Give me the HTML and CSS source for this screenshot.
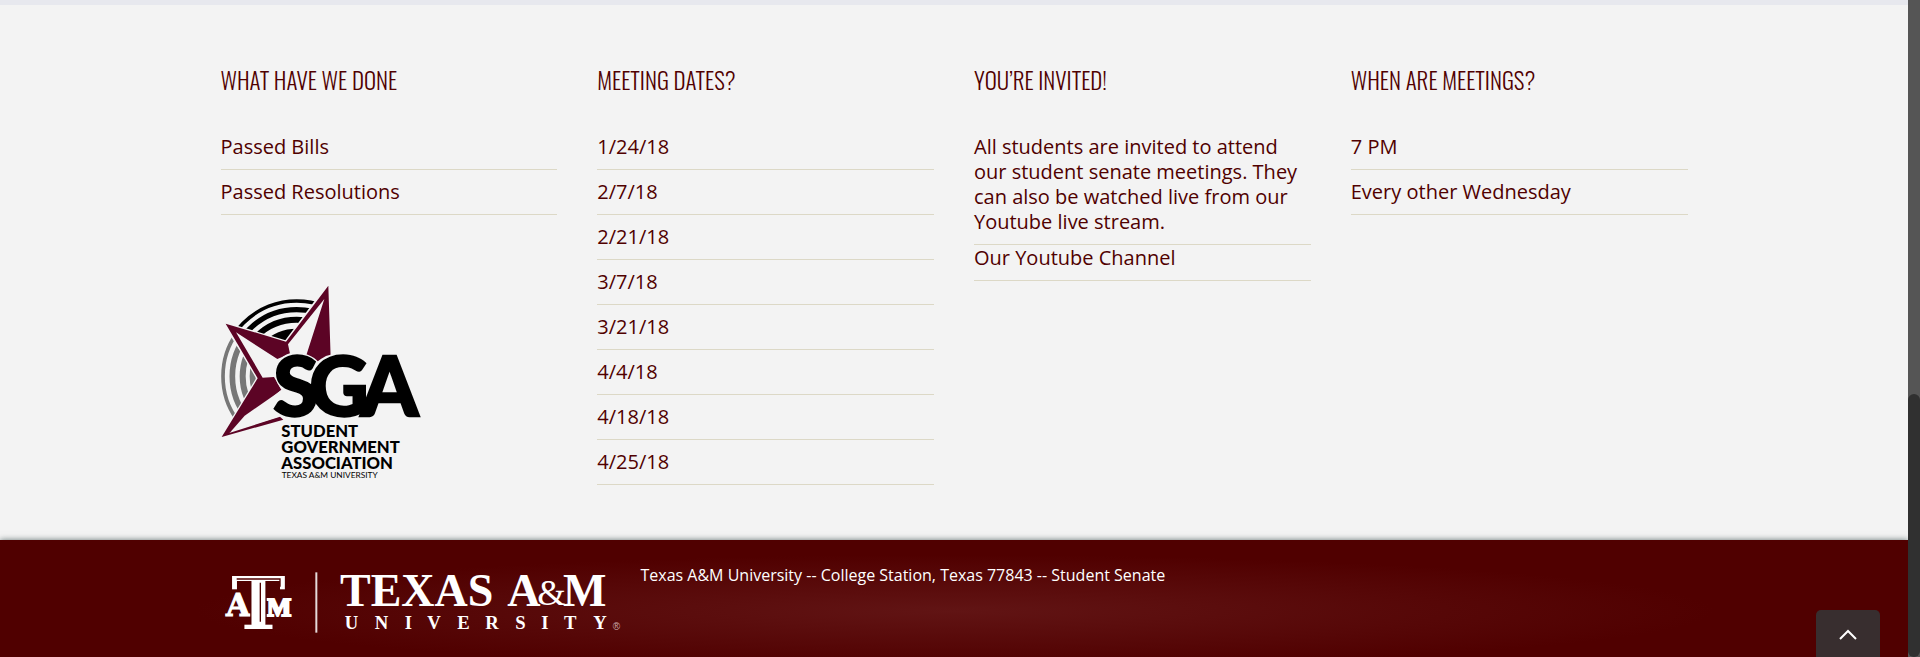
FILE: index.html
```html
<!DOCTYPE html>
<html lang="en">
<head>
    <meta charset="UTF-8">
    <meta name="viewport" content="width=device-width, initial-scale=1.0">
    <title>Student Senate</title>
    <link rel="stylesheet" href="styles.css">
</head>
<body>
    <section class="info">
        <div class="container columns">
            <div class="col">
                <h2>What have we done</h2>
                <ul>
                    <li><a href="#">Passed Bills</a></li>
                    <li><a href="#">Passed Resolutions</a></li>
                </ul>
                <svg class="sga-logo" viewBox="63 40 609 594" role="img" aria-label="Student Government Association">
                    <defs>
                        <clipPath id="ringTop"><path d="M80 50H383L258 218L110 172Z"/></clipPath>
                        <clipPath id="ringLeft"><path d="M50 190L92 200L172 325L97 450L50 450Z"/></clipPath>
                    </defs>
                    <!-- rings -->
                    <g clip-path="url(#ringTop)" fill="none" stroke="#000">
                        <circle cx="290" cy="320" r="226" stroke-width="11"/>
                        <circle cx="290" cy="320" r="200" stroke-width="16"/>
                        <circle cx="290" cy="320" r="170" stroke-width="18"/>
                        <circle cx="290" cy="320" r="128" stroke-width="30"/>
                    </g>
                    <g clip-path="url(#ringLeft)" fill="none" stroke="#777">
                        <circle cx="290" cy="320" r="221" stroke-width="11"/>
                        <circle cx="290" cy="320" r="193" stroke-width="17"/>
                        <circle cx="290" cy="320" r="162" stroke-width="18"/>
                        <circle cx="290" cy="320" r="132" stroke-width="18"/>
                    </g>
                    <!-- star -->
                    <path d="M383 48L392 278L350 284L300 330L242 444L65 502L173 326L77 162L258 216Z" fill="#f3f3f3" stroke="#f3f3f3" stroke-width="8"/>
                    <path d="M385 48L392 265L352 282L318 260L373 88L264 224L270 252L232 268L108 188L188 324L222 322L244 360L88 490L240 441L250 450L65 502L173 326L77 162L258 216Z" fill="#5c0425"/>
                    <path d="M92 486L134 438L244 362L240 440Z" fill="#f3f3f3"/>
                    <g class="sga-halo" aria-hidden="true">
                        <path d="M232 300Q250 255 300 258Q345 270 350 290Q390 255 440 260"/>
                        <path d="M232 300Q235 340 262 362L228 404"/>
                    </g>
                    <g class="sga-letters">
                        <text x="220" y="440">S</text>
                        <text x="328" y="440">G</text>
                        <text x="482" y="440">A</text>
                    </g>
                    <g class="sga-name">
                        <text x="244" y="502">STUDENT</text>
                        <text x="244" y="549">GOVERNMENT</text>
                        <text x="244" y="597">ASSOCIATION</text>
                    </g>
                    <text class="sga-school" x="245" y="624">TEXAS A&amp;M UNIVERSITY</text>
                </svg>
            </div>
            <div class="col">
                <h2>Meeting dates?</h2>
                <ul>
                    <li>1/24/18</li>
                    <li>2/7/18</li>
                    <li>2/21/18</li>
                    <li>3/7/18</li>
                    <li>3/21/18</li>
                    <li>4/4/18</li>
                    <li>4/18/18</li>
                    <li>4/25/18</li>
                </ul>
            </div>
            <div class="col">
                <h2>You’re invited!</h2>
                <ul>
                    <li>All students are invited to attend our student senate meetings. They can also be watched live from our Youtube live stream.</li>
                    <li class="tight"><a href="#">Our Youtube Channel</a></li>
                </ul>
            </div>
            <div class="col">
                <h2>When are meetings?</h2>
                <ul>
                    <li>7 PM</li>
                    <li>Every other Wednesday</li>
                </ul>
            </div>
        </div>
    </section>

    <footer>
        <div class="container footer-row">
            <a href="#" class="tamu">
                <svg viewBox="69 120 1200 192" role="img" aria-label="Texas A&amp;M University">
                    <g class="atm">
                        <text x="78" y="257">A</text>
                        <text x="200" y="257" class="atm-m">M</text>
                        <text x="94" y="297" class="atm-t">T</text>
                    </g>
                    <path d="M110 147H240V170M181 158V275" fill="none" stroke="#500000" stroke-width="4"/>
                    <path d="M349 127V308" stroke="#e5dada" stroke-width="6"/>
                    <g class="tamu-name">
                        <text x="420" y="228">TEXAS</text>
                        <text x="922" y="228">A</text>
                        <text x="1012" y="226" class="amp">&amp;</text>
                        <text x="1089" y="228">M</text>
                    </g>
                    <text class="tamu-univ" y="297" x="434 524 614 682 772 856 946 1024 1092 1180">UNIVERSITY</text>
                    <text class="tamu-reg" x="1238" y="299">®</text>
                </svg>
            </a>
            <p>Texas A&amp;M University -- College Station, Texas 77843 -- Student Senate</p>
        </div>
    </footer>

    <button type="button" class="to-top" aria-label="Back to top">
        <svg width="18" height="12" viewBox="0 0 18 12"><path d="M1 10L9 2L17 10" fill="none" stroke="#fff" stroke-width="2"/></svg>
    </button>
    <div class="scrollbar"><div class="thumb"></div></div>
</body>
</html>
```

FILE: styles.css
```css
* {
    box-sizing: border-box;
}

body {
    margin: 0;
    padding-right: 12px;
    min-height: 100vh;
    display: flex;
    flex-direction: column;
    background-color: #f3f3f3;
    color: #500000;
    font-family: "Open Sans", "Noto Sans", sans-serif;
    font-size: 20px;
    line-height: 25px;
}

a {
    color: inherit;
    text-decoration: none;
}

.container {
    width: 100%;
    max-width: 1467px;
    margin: 0 auto;
}

.info {
    border-top: 5px solid #e7e8ee;
    padding: 60px 0 55px;
}

.columns {
    display: grid;
    grid-template-columns: repeat(4, 1fr);
    gap: 40px;
}

h2 {
    margin: 0 0 30px;
    font-family: Oswald, "Open Sans Condensed Light", "Open Sans", sans-serif;
    font-size: 23px;
    font-weight: 300;
    line-height: 30px;
    text-transform: uppercase;
}

ul {
    list-style: none;
    margin: 0;
    padding: 0;
}

li {
    padding: 9px 0 10px;
    border-bottom: 1px solid #dcd8c6;
}

li.tight {
    padding-top: 0;
}

/* SGA logo */
.sga-logo {
    display: block;
    width: 203px;
    height: 198px;
    margin-top: 68px;
    overflow: visible;
}

.sga-halo {
    fill: none;
    stroke: #f3f3f3;
    stroke-width: 20px;
}

.sga-letters {
    font-family: Lato, sans-serif;
    font-weight: 900;
    font-size: 246px;
    stroke: #000;
    stroke-width: 7px;
}

.sga-name {
    font-family: Lato, sans-serif;
    font-weight: 900;
    font-size: 50px;
}

.sga-school {
    font-family: Lato, sans-serif;
    font-size: 25px;
}

/* footer */
footer {
    flex: 1;
    padding: 23px 0 24px;
    background: radial-gradient(ellipse 760px 56px at 50% 60%, #611414, #500000);
    box-shadow: 0 0 6px rgba(0, 30, 30, 0.6);
    color: #fff;
}

.footer-row {
    display: flex;
    gap: 18px;
}

.tamu {
    padding: 7px 0 0 2px;
}

.tamu svg {
    display: block;
    width: 400px;
    height: 64px;
    overflow: visible;
}

footer p {
    margin: 0;
    font-size: 16px;
    font-weight: 500;
}

.tamu text {
    fill: #fff;
    font-weight: bold;
}

.atm {
    font-family: "DejaVu Serif", serif;
    font-size: 93px;
    stroke: #fff;
    stroke-width: 3px;
}

.atm-m {
    font-family: "Liberation Serif", serif;
    font-size: 78px;
    stroke-width: 6px;
}

.atm-t {
    font-size: 219px;
    stroke: #500000;
    stroke-width: 8px;
    paint-order: stroke;
}

.tamu-name {
    font-family: "Liberation Serif", serif;
    font-size: 138px;
}

.tamu-name .amp {
    font-size: 110px;
    font-weight: normal;
}

.tamu-univ {
    font-family: "Liberation Serif", serif;
    font-size: 56px;
}

.tamu .tamu-reg {
    font-family: "Liberation Sans", sans-serif;
    font-size: 30px;
    font-weight: normal;
    fill: #c9a9a9;
}

/* back to top */
.to-top {
    position: fixed;
    right: 40px;
    bottom: 0;
    width: 64px;
    height: 47px;
    padding: 6px 0 0;
    border: none;
    border-radius: 5px 5px 0 0;
    background-color: #382e2f;
    cursor: pointer;
}

.to-top:hover {
    background-color: #4a3e3f;
}

.scrollbar {
    position: fixed;
    top: 0;
    right: 0;
    bottom: 0;
    width: 12px;
    display: flex;
    align-items: flex-end;
    background-color: #555;
}

.thumb {
    width: 100%;
    height: 40%;
    border-radius: 6px;
    background-color: #303030;
}
```
